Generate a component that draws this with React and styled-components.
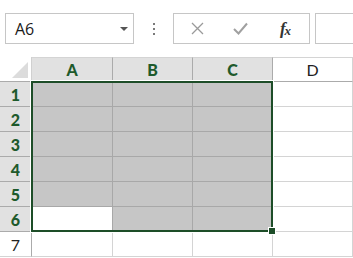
import React from "react";
import styled, { createGlobalStyle } from "styled-components";

const Global = createGlobalStyle`
  html, body { margin: 0; padding: 0; background: #fff; }
  body { width: 353px; height: 258px; overflow: hidden; font-family: "Open Sans", "Noto Sans", sans-serif; }
`;

const Page = styled.div`
  width: 353px;
  height: 258px;
  overflow: hidden;
  display: flex;
  flex-direction: column;
`;

const Toolbar = styled.div`
  display: flex;
  align-items: center;
  height: 31px;
  margin-top: 13px;
  margin-bottom: 13px;
  padding-left: 5px;
`;

const NameBox = styled.div`
  box-sizing: border-box;
  width: 129px;
  height: 31px;
  border: 1px solid #c6c6c6;
  display: flex;
  align-items: center;
  justify-content: space-between;
  padding: 0 5px 0 9px;
  font-size: 16px;
  color: #1a1a1a;
`;

const Caret = styled.span`
  width: 0;
  height: 0;
  border-left: 4px solid transparent;
  border-right: 4px solid transparent;
  border-top: 4px solid #555;
  margin-top: 1px;
`;

const Dots = styled.div`
  width: 39px;
  display: flex;
  flex-direction: column;
  align-items: center;
  gap: 3px;
  span {
    width: 2px;
    height: 2px;
    background: #7a7a7a;
  }
`;

const FxButtons = styled.div`
  box-sizing: border-box;
  width: 137px;
  height: 31px;
  border: 1px solid #c6c6c6;
  display: flex;
  align-items: center;
  padding-left: 12px;
`;

const IconSlot = styled.div`
  width: ${(p) => p.$w}px;
  display: flex;
  align-items: center;
  justify-content: center;
`;

const Fx = styled.span`
  font-family: "Liberation Serif", "DejaVu Serif", serif;
  font-style: italic;
  font-weight: bold;
  font-size: 17px;
  color: #333;
  letter-spacing: -1px;
  sub {
    font-size: 13px;
    vertical-align: -1px;
  }
`;

const FormulaInput = styled.div`
  box-sizing: border-box;
  margin-left: 5px;
  flex: 1;
  height: 31px;
  border: 1px solid #c6c6c6;
  border-right: none;
`;

const GridWrap = styled.div`
  position: relative;
  display: grid;
  grid-template-columns: 32px 81px 80px 80px 80px;
  grid-auto-rows: 25px;
`;

const Corner = styled.div`
  box-sizing: border-box;
  border-right: 1px solid #d0d0d0;
  border-bottom: 1px solid #ababab;
  position: relative;
  background: #fff;
  &::after {
    content: "";
    position: absolute;
    right: 3px;
    bottom: 3px;
    width: 0;
    height: 0;
    border-left: 16px solid transparent;
    border-bottom: 16px solid #dcdcdc;
  }
`;

const ColHead = styled.div`
  box-sizing: border-box;
  display: flex;
  align-items: center;
  justify-content: center;
  border-top: 1px solid #d4d4d4;
  border-right: 1px solid ${(p) => (p.$sel ? "#ababab" : "#d4d4d4")};
  border-bottom: 1px solid #ababab;
  background: ${(p) => (p.$sel ? "#e1e1e1" : "#fff")};
  color: ${(p) => (p.$sel ? "#1e5a2c" : "#222")};
  font-family: Lato, "Open Sans", sans-serif;
  font-weight: ${(p) => (p.$sel ? 900 : 400)};
  font-size: 16px;
`;

const RowHead = styled.div`
  box-sizing: border-box;
  display: flex;
  align-items: center;
  justify-content: center;
  border-right: 1px solid #ababab;
  border-bottom: 1px solid ${(p) => (p.$sel ? "#ababab" : "#d4d4d4")};
  background: ${(p) => (p.$sel ? "#e1e1e1" : "#fff")};
  color: ${(p) => (p.$sel ? "#1e5a2c" : "#222")};
  font-family: Lato, "Open Sans", sans-serif;
  font-weight: ${(p) => (p.$sel ? 900 : 400)};
  font-size: 16px;
`;

const Cell = styled.div`
  box-sizing: border-box;
  border-right: 1px solid ${(p) => (p.$sel ? "#a8a8a8" : "#d4d4d4")};
  border-bottom: 1px solid ${(p) => (p.$sel ? "#a8a8a8" : "#d4d4d4")};
  background: ${(p) => (p.$sel && !p.$active ? "#c6c6c6" : "#fff")};
`;

const Selection = styled.div`
  position: absolute;
  left: 31px;
  top: 24px;
  width: 242px;
  height: 151px;
  box-sizing: border-box;
  border: 2px solid #1d4d28;
  box-shadow: 0 0 0 1px #fff;
  pointer-events: none;
`;

const FillHandle = styled.div`
  position: absolute;
  right: -5px;
  bottom: -5px;
  width: 6px;
  height: 6px;
  background: #1d4d28;
  border: 1px solid #fff;
`;

const cols = ["A", "B", "C", "D"];
const rows = [1, 2, 3, 4, 5, 6, 7];

export default function App() {
  return (
    <Page>
      <Global />
      <Toolbar>
        <NameBox>
          <span>A6</span>
          <Caret />
        </NameBox>
        <Dots>
          <span />
          <span />
          <span />
        </Dots>
        <FxButtons>
          <IconSlot $w={22}>
            <svg width="13" height="13" viewBox="0 0 13 13">
              <path d="M1 1 L12 12 M12 1 L1 12" stroke="#9a9a9a" strokeWidth="1.3" />
            </svg>
          </IconSlot>
          <IconSlot $w={64}>
            <svg width="15" height="13" viewBox="0 0 15 13">
              <path d="M1 7 L5.5 11.5 L14 1.5" stroke="#a0a0a0" strokeWidth="2" fill="none" />
            </svg>
          </IconSlot>
          <IconSlot $w={26}>
            <Fx>
              f<sub>x</sub>
            </Fx>
          </IconSlot>
        </FxButtons>
        <FormulaInput />
      </Toolbar>
      <GridWrap>
        <Corner />
        {cols.map((c) => (
          <ColHead key={c} $sel={c !== "D"}>
            {c}
          </ColHead>
        ))}
        {rows.map((r) => (
          <React.Fragment key={r}>
            <RowHead $sel={r <= 6}>{r}</RowHead>
            {cols.map((c) => {
              const sel = r <= 6 && c !== "D";
              return <Cell key={c} $sel={sel} $active={r === 6 && c === "A"} />;
            })}
          </React.Fragment>
        ))}
        <Selection>
          <FillHandle />
        </Selection>
      </GridWrap>
    </Page>
  );
}
